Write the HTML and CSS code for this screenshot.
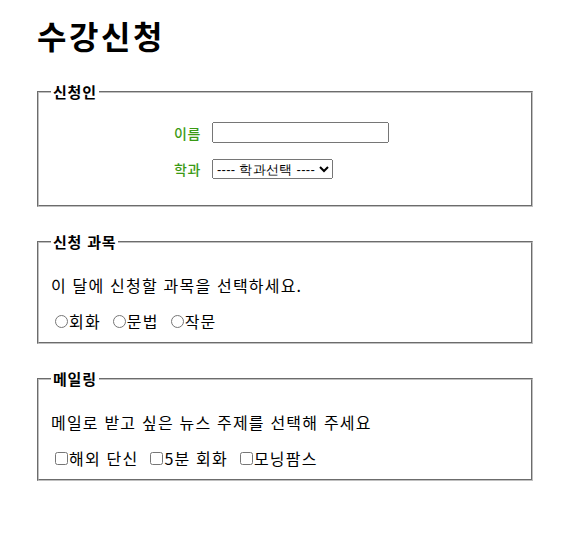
FILE: index.html
```html
<!DOCTYPE html>
<html lang="ko">
<head>
<meta charset="utf-8">
<link rel="stylesheet" href="styles.css">
</head>
<body>
<div class="page">
  <h1 class="title">수강신청</h1>
  <fieldset class="box">
    <legend class="legend">신청인</legend>
    <div class="form-grid">
      <label class="lbl" for="name">이름</label>
      <input class="txt" id="name" type="text">
      <label class="lbl" for="dept">학과</label>
      <select class="sel" id="dept">
        <option>---- 학과선택 ----</option>
      </select>
    </div>
  </fieldset>
  <fieldset class="box">
    <legend class="legend">신청 과목</legend>
    <p class="desc">이 달에 신청할 과목을 선택하세요.</p>
    <div class="opts">
      <label class="opt"><input class="radio" type="radio" name="subj">회화</label>
      <label class="opt"><input class="radio" type="radio" name="subj">문법</label>
      <label class="opt"><input class="radio" type="radio" name="subj">작문</label>
    </div>
  </fieldset>
  <fieldset class="box">
    <legend class="legend">메일링</legend>
    <p class="desc">메일로 받고 싶은 뉴스 주제를 선택해 주세요</p>
    <div class="opts">
      <label class="opt"><input class="check" type="checkbox">해외 단신</label>
      <label class="opt"><input class="check" type="checkbox">5분 회화</label>
      <label class="opt"><input class="check" type="checkbox">모닝팜스</label>
    </div>
  </fieldset>
</div>
</body>
</html>
```

FILE: styles.css
```css
body {
  margin: 0;
  font-family: "Noto Sans CJK KR", "Noto Sans", sans-serif;
  font-size: 16px;
  letter-spacing: 1.2px;
  color: #000;
  background: #fff;
}
.page {
  width: 500px;
  padding: 10px 0 0 35px;
}
.title {
  font-size: 32px;
  line-height: 50px;
  letter-spacing: 2.6px;
  margin: 0 0 22px 2px;
  font-weight: 700;
}
.box {
  margin: 0 2px 25px;
  padding: 6px 12px 10px;
  border: 2px groove #c0c0c0;
}
.legend {
  font-weight: 700;
  font-size: 15px;
  line-height: 20px;
  letter-spacing: 0.8px;
  padding: 0 2px;
}
.form-grid {
  display: grid;
  grid-template-columns: auto auto;
  justify-content: center;
  align-items: center;
  column-gap: 11px;
  row-gap: 16px;
  padding: 14px 7px 16px 0;
}
.lbl {
  color: #3a9a14;
  font-size: 14px;
  font-weight: 500;
  letter-spacing: 0.6px;
  text-align: right;
}
.txt {
  width: 177px;
  height: 21px;
  box-sizing: border-box;
  margin: 0;
}
.sel {
  width: 121px;
  height: 20px;
  box-sizing: border-box;
  font-size: 13px;
  letter-spacing: 0.3px;
  margin: 0;
  padding: 0;
}
.desc {
  margin: 16px 0 14px;
  line-height: 22px;
}
.opts {
  display: flex;
  gap: 8px;
  line-height: 22px;
}
.opt {
  display: flex;
  align-items: center;
}
.radio, .check {
  margin: 0 1px 0 4px;
  width: 13px;
  height: 13px;
}
```
